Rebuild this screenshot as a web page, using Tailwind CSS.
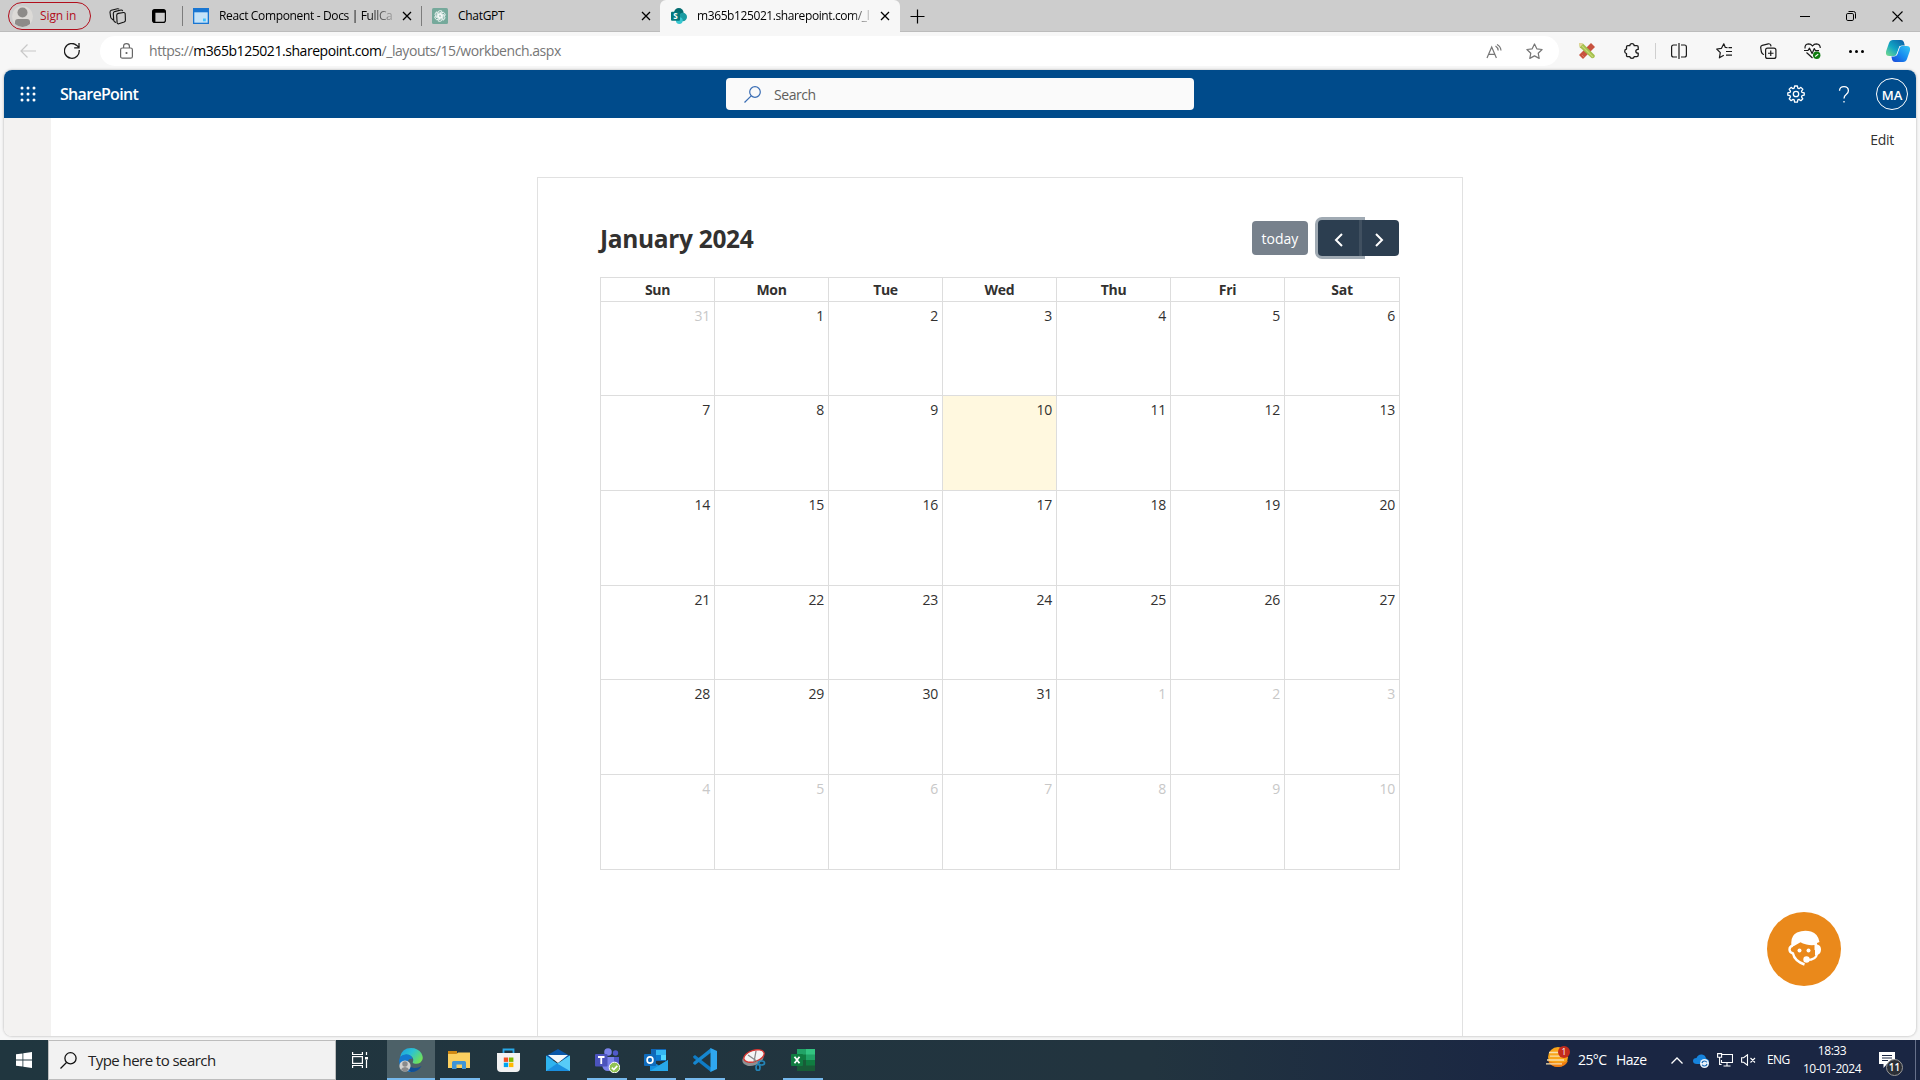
<!DOCTYPE html>
<html lang="en">
<head>
<meta charset="utf-8">
<title>SharePoint Workbench</title>
<script src="https://cdn.jsdelivr.net/npm/@tailwindcss/browser@4"></script>
</head>
<body class="w-[1920px] h-[1080px] overflow-hidden flex flex-col bg-[#f7f7f7] font-['Open_Sans','Noto_Sans',sans-serif] text-[#323130]">

<!-- Tab strip -->
<div class="h-8 shrink-0 bg-[#cdcdcd] flex items-stretch pl-2 text-[12px] text-black shadow-[inset_0_-1px_0_#bcbcbc]">
  <div class="w-[83px] h-7 mt-0.5 rounded-full border border-[#b10e1c] flex items-center pl-[3px] text-[#b10e1c]">
    <svg class="w-[21px] h-[21px]" viewBox="0 0 21 21"><circle cx="10.500" cy="10.500" r="10.500" fill="#dcdad7"/><circle cx="10.500" cy="6.500" r="5" fill="#8d8b89"/><path d="M3 18v-2q0-3 3-3h9q3 0 3 3v2q-3.500 3-7.500 3T3 18z" fill="#8d8b89"/></svg>
    <span class="ml-[7px] tracking-[-0.1px]">Sign in</span>
  </div>
  <div class="ml-[5px] w-[42px] flex items-center justify-center">
    <svg class="w-[17px] h-[17px]" viewBox="0 0 17 17" fill="none" stroke="#111" stroke-width="1.100"><path d="M9.300 5.400l5.300-.9q1.400-.1 1.600 1.200l.2 6.600q0 1.300-1.200 1.800l-5.400 1.700q-1.500.3-1.700-1.200L7.700 7.200q0-1.400 1.600-1.800z"/><path d="M7 14.500l-1.400-.8q-.8-.6-.9-1.600L4.300 5.500q0-1.400 1.300-1.900L12 2q1.300-.1 1.700 1.100M4.300 12l-2-1.700q-.6-.6-.7-1.500L1 4.300q0-1.600 1.300-2.100L8.500.7q1.200-.1 1.700.6"/></svg>
  </div>
  <div class="w-[42px] flex items-center justify-center">
    <svg class="w-[14px] h-[14px]" viewBox="0 0 14 14"><rect x=".6" y=".6" width="12.800" height="12.800" rx="2.200" fill="none" stroke="#000" stroke-width="1.200"/><path d="M.6 3.800V2.500Q.6.600 2.500.600h9q1.900 0 1.900 1.900v1.300zM.6 3h2.800v10.400Q.6 13.400.6 11z" fill="#000"/></svg>
  </div>
  <div class="ml-0.5 w-[239px] flex items-center">
    <div class="w-px h-5 bg-[#7c7c7c]"></div>
    <svg class="ml-[10px] w-4 h-4" viewBox="0 0 16 16"><rect width="16" height="16" fill="#1976d2"/><rect x="1.300" y="4.300" width="13.400" height="10.400" fill="#c5e3f8"/><rect x="10" y="10.500" width="2.800" height="2.800" fill="#40c4ff"/></svg>
    <span class="ml-[10px] w-[174px] whitespace-nowrap tracking-[-0.35px] bg-gradient-to-r from-black from-85% to-black/20 bg-clip-text text-transparent">React Component - Docs | FullCa</span>
    <svg class="ml-[9px] w-[10px] h-[10px]" viewBox="0 0 10 10"><path d="M1 1l8 8M9 1L1 9" stroke="#000" stroke-width="1.300"/></svg>
  </div>
  <div class="w-[239px] flex items-center">
    <div class="w-px h-5 bg-[#7c7c7c]"></div>
    <svg class="ml-[10px] w-4 h-4" viewBox="0 0 16 16"><rect width="16" height="16" rx="1.500" fill="#75a99b"/><g fill="none" stroke="#fff" stroke-width=".8"><path id="petal" d="M6 9.100V4.900Q6 2.600 8.200 2.600q1.300 0 2 .8L6.800 5.400v3.700"/><use href="#petal" transform="rotate(60 8 8)"/><use href="#petal" transform="rotate(120 8 8)"/><use href="#petal" transform="rotate(180 8 8)"/><use href="#petal" transform="rotate(240 8 8)"/><use href="#petal" transform="rotate(300 8 8)"/></g></svg>
    <span class="ml-[10px] w-[174px] tracking-[-0.3px]">ChatGPT</span>
    <svg class="ml-[9px] w-[10px] h-[10px]" viewBox="0 0 10 10"><path d="M1 1l8 8M9 1L1 9" stroke="#000" stroke-width="1.300"/></svg>
  </div>
  <div class="w-[240px] flex items-center bg-[#f7f7f7] rounded-t-[6px]">
    <svg class="ml-[11px] w-4 h-4" viewBox="0 0 16 16"><circle cx="7.800" cy="4.800" r="4.800" fill="#036c70"/><circle cx="11.800" cy="9" r="4.200" fill="#1a9ba1"/><circle cx="8.300" cy="12.600" r="3.400" fill="#37c6d0"/><rect y="3.800" width="9" height="9" rx="1" fill="#03787c"/><text x="4.500" y="11.200" font-size="8" font-weight="700" fill="#fff" text-anchor="middle">S</text></svg>
    <span class="ml-[10px] w-[175px] whitespace-nowrap tracking-[-0.4px] bg-gradient-to-r from-black from-88% to-black/10 bg-clip-text text-transparent">m365b125021.sharepoint.com/_l</span>
    <svg class="ml-[8px] w-[10px] h-[10px]" viewBox="0 0 10 10"><path d="M1 1l8 8M9 1L1 9" stroke="#000" stroke-width="1.300"/></svg>
  </div>
  <div class="w-[35px] flex items-center justify-center"><svg class="w-[15px] h-[15px]" viewBox="0 0 15 15"><path d="M7.500.5v14M.5 7.500h14" stroke="#000" stroke-width="1.200"/></svg></div>
  <div class="ml-auto flex">
    <div class="w-[46px] flex items-center justify-center"><div class="w-[10px] h-px bg-black"></div></div>
    <div class="w-[46px] flex items-center justify-center"><svg class="w-[10px] h-[10px]" viewBox="0 0 10 10" fill="none" stroke="#000"><rect x=".5" y="2.500" width="7" height="7" rx="1.300"/><path d="M2.500.5h5q2 0 2 2v5"/></svg></div>
    <div class="w-[46px] flex items-center justify-center"><svg class="w-[11px] h-[11px]" viewBox="0 0 11 11"><path d="M.5.5l10 10M10.500.5l-10 10" stroke="#000" stroke-width="1.100"/></svg></div>
  </div>
</div>

<!-- Address toolbar -->
<div class="h-[38px] shrink-0 flex items-center pl-[6px] bg-[#f7f7f7]">
  <div class="w-11 flex justify-center"><svg class="w-4 h-4" viewBox="0 0 16 16" fill="none" stroke="#c8c8c8" stroke-width="1.200"><path d="M16 8H1M7.500 1.500L1 8l6.500 6.500"/></svg></div>
  <div class="w-11 flex justify-center"><svg class="w-4 h-4" viewBox="0 0 16 16" fill="none" stroke="#1b1b1b" stroke-width="1.300"><path d="M15.200 7A7.400 7.400 0 1 1 12.800 2.400L15 4.500M15 0v4.800h-4.800"/></svg></div>
  <div class="ml-[6px] w-[1459px] h-[30px] rounded-full bg-white flex items-center">
    <svg class="ml-[20px] w-[13px] h-4" viewBox="0 0 13 16" fill="none" stroke="#666" stroke-width="1.200"><rect x=".6" y="5" width="11.800" height="10.200" rx="1.800"/><path d="M3.600 5V3.300Q3.600.6 6.500.6t2.900 2.700V5"/><circle cx="6.500" cy="10" r=".5" fill="#666"/></svg>
    <span class="ml-4 mb-px text-[14px] tracking-[-0.44px] text-[#767676] whitespace-nowrap">https://<span class="text-black">m365b125021.sharepoint.com</span>/_layouts/15/workbench.aspx</span>
    <div class="ml-auto w-10 flex justify-center"><svg class="w-4 h-[15px]" viewBox="0 0 16 15" fill="none" stroke="#767676" stroke-width="1.200"><path d="M1 14L5.700 3l4.700 11M2.600 10.300h6.200M9.500 2q2.500 1.500 2.700 4.500M11 .5q3.700 2 4 6"/></svg></div>
    <div class="w-10 mr-[5px] flex justify-center"><svg class="w-[17px] h-[17px]" viewBox="0 0 17 17" fill="none" stroke="#767676" stroke-width="1.200" stroke-linejoin="round"><path d="M8.500 1l2.300 4.800 5.300.7-3.900 3.700 1 5.200-4.700-2.500-4.700 2.500 1-5.200L.9 6.500l5.300-.7z"/></svg></div>
  </div>
  <div class="ml-[6px] w-11 flex justify-center"><svg class="w-4 h-4" viewBox="0 0 16 16"><path d="M12 0l4 4L4 16l-4-4z" fill="#c8523f"/><path d="M3.500 12.500l1 1" stroke="#e9a08f"/><path d="M0 0l4.200.8L15.500 12q.8 1.300-.3 2.500-1.300 1.300-2.700.5L.8 4.200z" fill="#a3bf4c"/><path d="M3 3l11 11" stroke="#c6d873" stroke-width="1.200"/><path d="M0 0l4.200.8L.8 4.200z" fill="#ead9a0"/></svg></div>
  <div class="w-11 flex justify-center"><svg class="w-[15px] h-4" viewBox="0 0 15 16" fill="none" stroke="#1b1b1b" stroke-width="1.300" stroke-linejoin="round"><path d="M2.500 4q0-1.300 1.300-1.300h2Q6 .7 8 .7t2.200 2h2.600q1.400 0 1.400 1.400v2.300q-2.400 0-2.400 1.900t2.400 1.900v2.100q0 1.400-1.400 1.400h-2.600q-.2 1.600-2.200 1.600t-2.200-1.600h-2q-1.300 0-1.300-1.300v-1.800Q.7 10.300.7 8.300t1.800-2.200z"/></svg></div>
  <div class="ml-[2px] w-px h-4 bg-[#cfcfcf]"></div>
  <div class="ml-[1px] w-11 flex justify-center"><svg class="w-4 h-4" viewBox="0 0 16 16" fill="none" stroke="#1b1b1b" stroke-width="1.200"><path d="M6 2H2.500Q.6 2 .6 4v8q0 2 1.900 2H6M10 2h3.500q1.900 0 1.900 2v8q0 2-1.900 2H10M8 0v16"/></svg></div>
  <div class="w-11 flex justify-center ml-px"><svg class="w-[17px] h-4" viewBox="0 0 17 16" fill="none" stroke="#1b1b1b" stroke-width="1.200" stroke-linejoin="round"><path d="M11.500 4.700L9.300 4.500 7.800.8 5.500 5.300.7 6l3.600 3.600-.9 5.200 4.400-2.500M12.500 4.700H16M10 8.500h6M10 12.200h6"/></svg></div>
  <div class="w-11 flex justify-center"><svg class="w-[17px] h-4" viewBox="0 0 17 16" fill="none" stroke="#1b1b1b" stroke-width="1.200"><rect x="5.600" y="5.100" width="10.300" height="10.300" rx="2"/><path d="M10.750 7.500v5.500M8 10.250h5.500M4 11.500l-.8-.3Q1.800 10.400 1.400 9L.7 4.700Q.5 2.800 2.200 2.300L8.300.8q1.700-.3 2.400 1.200l.3 1.300"/></svg></div>
  <div class="w-11 flex justify-center"><svg class="w-[17px] h-4" viewBox="0 0 17 16" fill="none" stroke="#1b1b1b" stroke-width="1.200" stroke-linejoin="round"><path d="M1 5.500Q.6 1 4.500.8q2.500 0 4 2.200Q10 .8 12.500.8q3.600.2 3.800 4.200M0 7.500h4l1.500-2.300 2.600 5.300 2.200-5 1.200 2.200H15M2.500 9.500L8.500 15"/><circle cx="12.700" cy="12.300" r="3.700" fill="#107c10" stroke="none"/><path d="M11.200 13.500l3-2.400" stroke="#fff"/></svg></div>
  <div class="w-11 flex justify-center gap-[3px]"><i class="w-[3px] h-[3px] rounded-full bg-black"></i><i class="w-[3px] h-[3px] rounded-full bg-black"></i><i class="w-[3px] h-[3px] rounded-full bg-black"></i></div>
  <div class="w-10 flex justify-center"><svg class="w-6 h-[22px]" viewBox="0 0 24 22"><defs><linearGradient id="cpa" x1="0" y1="1" x2="1" y2="0"><stop offset="0" stop-color="#7ade8b"/><stop offset=".45" stop-color="#11a5c4"/><stop offset="1" stop-color="#0c59a4"/></linearGradient><linearGradient id="cpb" x1="0" y1="1" x2="1" y2="0"><stop offset="0" stop-color="#1b44d8"/><stop offset=".5" stop-color="#168df0"/><stop offset="1" stop-color="#36c8f4"/></linearGradient></defs><path d="M7 0h8q2 0 2.800 2l1 3.500h-3q-2 0-2.600 2L11 14q-.8 2-3 2H3q-4 0-2.800-5L3 3Q4 0 7 0z" fill="url(#cpa)"/><path d="M17 22H9q-2 0-2.800-2l-.8-3.500H8q2.200 0 3-2L13.200 8q.8-2 2.800-2h5q4 0 2.800 5L21 19q-1 3-4 3z" fill="url(#cpb)"/><path d="M9.500 16q1.500-.5 2-2l2.200-6.500Q14.200 6 15 6l-1.500 0-3.500 9.500z" fill="#f7f7f7"/></svg></div>
</div>

<!-- Web page -->
<main class="mx-1 h-[966px] shrink-0 rounded-lg overflow-hidden bg-white flex flex-col shadow-[0_0_2px_1px_#d4d4d4]">
  <header class="h-12 shrink-0 bg-[#004b8b] flex items-center text-white">
    <svg class="ml-4 w-4 h-4" viewBox="0 0 16 16" fill="#fff"><g id="dots"><circle cx="2" cy="2" r="1.500"/><circle cx="8" cy="2" r="1.500"/><circle cx="14" cy="2" r="1.500"/></g><use href="#dots" y="6"/><use href="#dots" y="12"/></svg>
    <span class="ml-6 w-[120px] text-[16px] font-semibold tracking-[-0.68px]">SharePoint</span>
    <div class="ml-[546px] w-[468px] h-8 rounded bg-[#fafafa] flex items-center text-[#605e5c]">
      <svg class="ml-[18px] w-[17px] h-[17px]" viewBox="0 0 17 17" fill="none" stroke="#3a6db4" stroke-width="1.200"><circle cx="11" cy="6" r="5.300"/><path d="M7.200 9.800L.5 16.500"/></svg>
      <span class="ml-[13px] text-[14px] tracking-[-0.45px] pt-px">Search</span>
    </div>
    <svg class="ml-auto w-[18px] h-[18px]" viewBox="0 0 18 18" fill="none" stroke="#fff" stroke-width="1.300" stroke-linejoin="round"><circle cx="9" cy="9" r="2.700"/><path d="M7.600 1h2.800l.4 2.200 1.200.5 1.900-1.300 1.900 1.900-1.300 1.900.5 1.200 2.200.4v2.400l-2.200.5-.5 1.200 1.300 1.900-1.900 1.900-1.900-1.300-1.200.5-.4 2.200H7.600l-.4-2.200-1.200-.5-1.900 1.300-1.900-1.900 1.300-1.900-.5-1.200-2.200-.5V7.800L3 7.400l.5-1.200-1.300-1.900 1.900-1.900L6 3.700l1.200-.5z"/></svg>
    <svg class="ml-[33px] w-[12px] h-[17px]" viewBox="0 0 12 17" fill="none" stroke="#fff" stroke-width="1.300"><path d="M1.500 4.800Q1.700.7 6 .7t4.400 4q0 1.800-2 3.600Q6 10.200 6 12.500"/><path d="M6 15v1.600"/></svg>
    <div class="ml-[26px] mr-2 w-8 h-8 rounded-full border border-white flex items-center justify-center text-[13px] font-semibold pt-[3px]">MA</div>
  </header>
  <div class="flex flex-1">
    <aside class="w-[47px] bg-[#f3f2f1]"></aside>
    <div class="flex-1 flex">
      <section class="ml-[486px] mt-[59px] w-[926px] border border-b-0 border-[#e1e1e1] px-[62px] pt-[41px]">
        <div class="flex items-center h-[38px]">
          <h2 class="text-[24.5px] font-bold tracking-[-0.33px] leading-[38px] pt-0.5">January 2024</h2>
          <button class="ml-auto w-14 h-[34px] rounded bg-[#77818c] text-white text-[14px] pt-px">today</button>
          <div class="ml-[10px] mr-px flex">
            <button class="w-[44px] h-9 rounded-l bg-[#2c3e50] flex items-center justify-center shadow-[0_0_0_3px_#a0aab3] border-r-3 border-[#405060]"><svg class="w-[9px] h-[14px] mt-1" viewBox="0 0 9 14" fill="none" stroke="#fff" stroke-width="2"><path d="M8 1L2 7l6 6"/></svg></button>
            <button class="relative w-[37px] h-9 rounded-r bg-[#2c3e50] flex items-center justify-center pr-[3px]"><svg class="w-[9px] h-[14px] mt-1" viewBox="0 0 9 14" fill="none" stroke="#fff" stroke-width="2"><path d="M1 1l6 6-6 6"/></svg></button>
          </div>
        </div>
        <div class="mt-5 w-[800px] border-l border-t border-[#ddd] text-[14px]">
          <div id="days" class="grid grid-cols-[114px_114px_114px_114px_114px_114px_115px] h-6 font-bold tracking-[-0.3px]"></div>
          <div id="dates" class="-mt-px grid grid-cols-[114px_114px_114px_114px_114px_114px_115px] grid-rows-[95px_95px_95px_94px_95px_95px] tracking-[-0.3px]"></div>
        </div>
      </section>
      <span class="ml-auto mr-[22px] mt-[11px] text-[14px] tracking-[-0.3px]">Edit</span>
    </div>
  </div>
</main>

<!-- Support chat bubble -->
<div class="absolute left-[1767px] top-[912px] w-[74px] h-[74px] rounded-full bg-[#ea891b] flex items-center justify-center">
  <svg class="w-9 h-9 mb-0.5 ml-1" viewBox="0 0 36 36"><path d="M3.500 16Q2 6 9 2.500q7-3 14-1 7 2 8.500 10.500L29 13v7h-2.500v-5q-4 .5-8-.5t-6-2.200L6 16z" fill="#fff"/><path d="M5 15.500q-3.500 1-3.500 4T5 23.500q1.500 7.500 11.500 11" fill="none" stroke="#fff" stroke-width="2.400"/><path d="M27 14.500h2.500q3.500 1 3.500 5t-3.500 5.500H27z" fill="#fff"/><path d="M29 24q-1 6-10 6" fill="none" stroke="#fff" stroke-width="2.200"/><circle cx="18.500" cy="29.500" r="3.200" fill="#fff"/><circle cx="11.500" cy="20.500" r="2" fill="#fff"/><circle cx="20.500" cy="20.500" r="2" fill="#fff"/></svg>
</div>

<!-- Taskbar -->
<footer class="mt-[4px] h-10 shrink-0 flex items-stretch text-white text-[14px] bg-linear-to-r from-[#20363f] via-[#22343f] via-60% to-[#1a2643] to-80%">
  <div class="w-12 flex items-center justify-center"><svg class="w-4 h-4" viewBox="0 0 16 16" fill="#fff"><path d="M0 2.300L6.500 1.400v6.200H0zM7.300 1.300L16 0v7.600H7.300zM0 8.400h6.500v6.200L0 13.700zM7.300 8.400H16V16l-8.700-1.300z"/></svg></div>
  <div class="w-72 bg-[#f2f2f2] border border-[#bdbdbd] flex items-center text-[#222]">
    <svg class="ml-[11px] w-[17px] h-[17px]" viewBox="0 0 17 17" fill="none" stroke="#111" stroke-width="1.300"><circle cx="10.500" cy="6.300" r="5.600"/><path d="M6.500 10.500L.5 16.500"/></svg>
    <span class="ml-[11px] text-[15px] tracking-[-0.55px]">Type here to search</span>
  </div>
  <div class="w-[51px] flex items-center justify-center"><svg class="w-4 h-4 mr-[4px]" viewBox="0 0 16 16" fill="none" stroke="#fff" stroke-width="1.200"><path d="M.6 0v2.500h9.800V0M.6 16v-2.500h9.800V16M14.500 0v3M14.500 8v8"/><rect x=".6" y="4.600" width="9.800" height="6.800"/><path d="M13 5h3v2.500h-3z" fill="#fff" stroke="none"/></svg></div>
  <div class="w-12 flex items-center justify-center bg-[#4d6168] border-b-2 border-[#76b9ed]"><svg class="w-6 h-6 mt-[2px]" viewBox="0 0 24 24"><defs><linearGradient id="eg" x1="0" x2="1" y1="0" y2=".6"><stop offset="0" stop-color="#1b9de2"/><stop offset=".5" stop-color="#2cc3d2"/><stop offset="1" stop-color="#6fe05a"/></linearGradient></defs><path d="M12 0q7 0 10.500 5.500 3 6-1 9-3 2-6.500 1-2-.8-1-2 1-3-1.500-5Q7 5 1 9 3 0 12 0z" fill="url(#eg)"/><path d="M1 9q5-4.500 10.500-1.500 2 1.500 2 3.500-5-1-5 5 1 6 7.500 7.300-3 1-6 .5Q0 21.500 0 12.500z" fill="#1479d0"/><path d="M9 13q0 6 6 7 4 .5 7.500-2Q19 24 12 24q-6-4-3-11z" fill="#124f95"/><circle cx="6" cy="18" r="5.600" fill="#d2d2d0"/><circle cx="6" cy="16" r="2.700" fill="#8b8b8b"/><path d="M2 21.500Q3 19 6 19t4 2.500q-4 4-8 0z" fill="#8b8b8b"/></svg></div>
  <div class="ml-[5px] w-10 flex items-center justify-center border-b-2 border-[#76b9ed]"><svg class="w-[22px] h-[19px] mt-[2px] mr-0.5" viewBox="0 0 22 19"><path d="M0 0h9v4H0z" fill="#d18a13"/><path d="M0 3h8.500L10 1.500h12V17H0z" fill="#fbd060"/><path d="M4 18V11.500Q4 10 5.500 10h11q1.500 0 1.500 1.500V18h-4v-4.500H8.500V18z" fill="#3f95d8"/></svg></div>
  <div class="w-[9px]"></div>
  <div class="w-10 flex items-center justify-center"><svg class="w-[23px] h-[24px] mr-0.5" viewBox="0 0 23 24"><path d="M6.500 6V1.500h10V6" fill="none" stroke="#29a9e8" stroke-width="1.800"/><path d="M0 5h23v15q0 4-4 4H4q-4 0-4-4z" fill="#f2f2f2"/><path d="M6.800 9.500h4.400v4.400H6.800z" fill="#f25022"/><path d="M12 9.500h4.400v4.400H12z" fill="#7fba00"/><path d="M6.800 14.700h4.400v4.400H6.800z" fill="#00a4ef"/><path d="M12 14.700h4.400v4.400H12z" fill="#ffb900"/></svg></div>
  <div class="w-[9px]"></div>
  <div class="w-10 flex items-center justify-center"><svg class="w-6 h-[22px]" viewBox="0 0 24 22"><path d="M0 7l12-7 12 7v4H0z" fill="#0a56a8"/><path d="M2 6h20l-10 8z" fill="#f4f8fb"/><path d="M0 6.500L12 15l12-8.500V22H0z" fill="#2fb4ef"/><path d="M0 22L24 6.500V22z" fill="#57ccf8"/><path d="M0 22l11-7.500 13 7.500z" fill="#1a8fdf"/></svg></div>
  <div class="w-[9px]"></div>
  <div class="w-10 flex items-center justify-center border-b-2 border-[#76b9ed]"><svg class="w-[25px] h-[25px] mt-[3px]" viewBox="0 0 25 25"><circle cx="13" cy="4" r="3.800" fill="#7b83eb"/><circle cx="20.500" cy="5" r="2.700" fill="#5059c9"/><path d="M15 9h9v7q0 5-4.500 5T15 17z" fill="#5059c9"/><path d="M7 9h12v8q-1 6-6 6t-6-6z" fill="#7b83eb"/><rect y="6" width="12.500" height="12.500" rx="1" fill="#4b53bc"/><path d="M3 9h6.500M6.250 9v7" stroke="#fff" stroke-width="1.800"/><circle cx="19.500" cy="19.500" r="5.300" fill="#92c353" stroke="#fff"/><path d="M16.800 19.600l2 2 3.500-3.700" fill="none" stroke="#fff" stroke-width="1.600"/></svg></div>
  <div class="w-[9px]"></div>
  <div class="w-10 flex items-center justify-center border-b-2 border-[#76b9ed]"><svg class="w-6 h-[22px] mt-[2px]" viewBox="0 0 24 22"><path d="M7 0h15v12H7z" fill="#1066b5"/><path d="M12 1h10v5H12z" fill="#35b8f1"/><path d="M12 6h5v5h-5z" fill="#0a7bd0"/><path d="M17 6h5v5h-5z" fill="#50d9ff"/><path d="M6 11l9 5.500 9-5.500v11H6z" fill="#1490df"/><path d="M6 22L24 11v11z" fill="#28a8ea"/><rect y="5" width="12" height="12" rx="1" fill="#0f6cbd"/><ellipse cx="6" cy="11" rx="2.900" ry="3.200" fill="none" stroke="#fff" stroke-width="1.700"/></svg></div>
  <div class="w-[9px]"></div>
  <div class="w-10 flex items-center justify-center border-b-2 border-[#76b9ed]"><svg class="w-6 h-6 mt-[2px]" viewBox="0 0 24 24"><path d="M0 8.500L2 7l16 12.500V24L.5 10z" fill="#0f7cc6"/><path d="M0 15.500L2 17 18 4.500V0L.5 14z" fill="#1687d0"/><path d="M17.500 0L24 3v18l-6.500 3z" fill="#2fa7f0"/></svg></div>
  <div class="w-[9px]"></div>
  <div class="w-10 flex items-center justify-center"><svg class="w-6 h-[22px]" viewBox="0 0 24 22"><ellipse cx="11" cy="9.500" rx="11" ry="7" transform="rotate(-20 11 9.500)" fill="#8d9194"/><ellipse cx="12" cy="7" rx="10.500" ry="5.600" transform="rotate(-18 12 7)" fill="#f5f5f5" stroke="#d73531" stroke-width="1.300"/><path d="M6 6l10 7M14 2l-2 11" stroke="#888" stroke-width="1.300"/><g fill="none" stroke="#2484b7" stroke-width="1.700"><ellipse cx="19.500" cy="14" rx="3" ry="2"/><ellipse cx="16" cy="18.500" rx="2" ry="3"/></g></svg></div>
  <div class="w-[9px]"></div>
  <div class="w-10 flex items-center justify-center border-b-2 border-[#76b9ed]"><svg class="w-6 h-[22px] mt-[1px]" viewBox="0 0 24 22"><path d="M6 0h18v22H6z" fill="#21a366"/><path d="M15 0h9v5.500h-9z" fill="#33c481"/><path d="M6 5.500h9V11H6z" fill="#107c41"/><path d="M6 11h18v11H6z" fill="#185c37"/><path d="M15 11h9v5.500h-9z" fill="#107c41"/><rect y="5" width="12" height="12" rx="1" fill="#107c41"/><path d="M3.500 7.700l5 6.600M8.500 7.700l-5 6.600" stroke="#fff" stroke-width="1.800"/></svg></div>
  <div class="ml-auto flex items-center">
    <svg class="w-6 h-6 mb-1" viewBox="0 0 24 24"><circle cx="12" cy="11" r="10" fill="#f9a51a"/><path d="M2 15q10 4 20 0-3 6-10 6T2 15z" fill="#ee7d12"/><path d="M3 6.500h10M4 10.200h14M1 14h17M0 17.800h16" stroke="#f8dfac" stroke-width="1.300"/><circle cx="18" cy="6" r="6" fill="#c42b1c"/><text x="18" y="9" font-size="8.500" fill="#fff" text-anchor="middle">1</text></svg>
    <span class="ml-2 mb-px w-[38px] tracking-[-0.6px]">25°C</span>
    <span class="w-[55px] mb-px tracking-[-0.5px]">Haze</span>
    <svg class="w-[12px] h-[7px]" viewBox="0 0 12 7" fill="none" stroke="#fff" stroke-width="1.300"><path d="M.5 6.500L6 1l5.500 5.500"/></svg>
    <svg class="ml-[10px] w-4 h-[14px] mt-[2px]" viewBox="0 0 16 14"><path d="M4 10Q0 10 0 7t3.500-3Q5 0 9 .500q3.500.5 4 4Q16 5 16 8v2z" fill="#1683dc"/><circle cx="11.500" cy="9.500" r="4.500" fill="#e9f3fb"/><path d="M9 9q.5-2 2.500-2 1.500 0 2.300 1.300M14 10q-.5 2-2.500 2-1.500 0-2.300-1.300" fill="none" stroke="#1566b2" stroke-width="1.200"/></svg>
    <svg class="ml-2 w-4 h-[14px]" viewBox="0 0 16 14" fill="none" stroke="#fff" stroke-width="1.100"><path d="M5 1.500h10.500v8h-11V7M10 9.500v3.500M6.500 13h7"/><path d="M.6.600h4v3.600h-4zM2.600 4v7.500h2" /></svg>
    <svg class="ml-2 w-[15px] h-[12px]" viewBox="0 0 15 12" fill="none" stroke="#fff" stroke-width="1.100"><path d="M.6 3.800h2L6.500.8v10.400L2.600 8.200h-2zM9.500 4l4.500 4.500M14 4L9.500 8.500"/></svg>
    <span class="ml-[11px] w-[24px] text-[12px] tracking-[-0.6px]">ENG</span>
    <div class="ml-2 w-[66px] text-center text-[12px] leading-[18px] tracking-[-0.45px] whitespace-nowrap">18:33<br>10-01-2024</div>
    <div class="relative ml-[14px] w-[36px] h-10">
      <svg class="absolute left-0 top-3 w-4 h-4" viewBox="0 0 16 16"><path d="M0 0h16v12H8l-3.500 4v-4H0z" fill="#fff"/><path d="M3 3.500h10M3 6h10M3 8.500h6" stroke="#1a2643" stroke-width="1"/></svg>
      <span class="absolute left-[7px] top-[19px] w-[17px] h-[17px] rounded-full bg-[#2b2f36] border border-[#999] text-[10px] font-semibold leading-[14px] text-center">11</span>
    </div>
    <div class="w-px h-10 bg-[#66708a] mr-1"></div>
  </div>
</footer>

<script>
  const days = document.getElementById('days');
  for (const d of ['Sun', 'Mon', 'Tue', 'Wed', 'Thu', 'Fri', 'Sat']) {
    days.insertAdjacentHTML('beforeend', `<div class="border-r border-[#ddd] text-center leading-[23px]">${d}</div>`);
  }
  const dates = document.getElementById('dates');
  for (let i = 0; i < 42; i++) {
    const n = i === 0 ? 31 : i > 31 ? i - 31 : i;
    const outside = i === 0 || i > 31;
    dates.insertAdjacentHTML('beforeend',
      `<div class="border-r border-b border-[#ddd] text-right pr-1 leading-5 ${i < 7 ? 'border-t pt-1' : 'pt-1'} ${i === 10 ? 'bg-[#fff8df]' : ''} ${outside ? 'text-[#c8c8c8]' : ''}">${n}</div>`);
  }
</script>
</body>
</html>
